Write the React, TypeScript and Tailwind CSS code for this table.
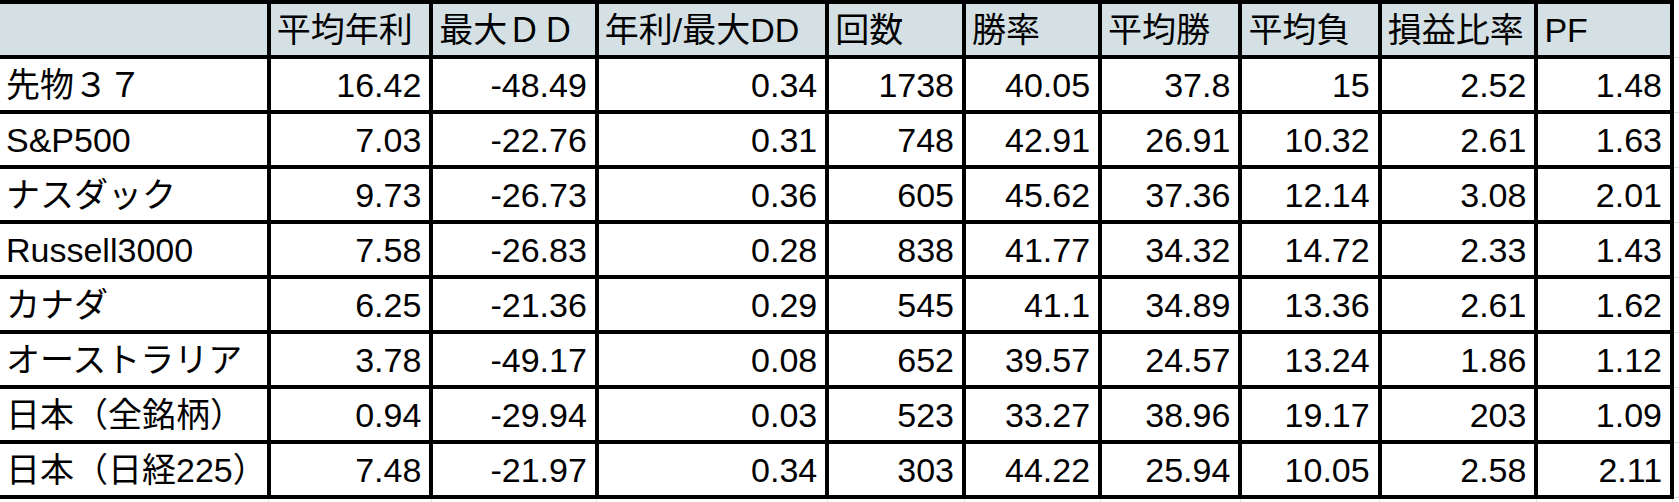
import React from 'react';

type Row = { name: string; values: string[] };

const headers = ['平均年利', '最大ＤＤ', '年利/最大DD', '回数', '勝率', '平均勝', '平均負', '損益比率', 'PF'];

const rows: Row[] = [
  { name: '先物３７', values: ['16.42', '-48.49', '0.34', '1738', '40.05', '37.8', '15', '2.52', '1.48'] },
  { name: 'S&P500', values: ['7.03', '-22.76', '0.31', '748', '42.91', '26.91', '10.32', '2.61', '1.63'] },
  { name: 'ナスダック', values: ['9.73', '-26.73', '0.36', '605', '45.62', '37.36', '12.14', '3.08', '2.01'] },
  { name: 'Russell3000', values: ['7.58', '-26.83', '0.28', '838', '41.77', '34.32', '14.72', '2.33', '1.43'] },
  { name: 'カナダ', values: ['6.25', '-21.36', '0.29', '545', '41.1', '34.89', '13.36', '2.61', '1.62'] },
  { name: 'オーストラリア', values: ['3.78', '-49.17', '0.08', '652', '39.57', '24.57', '13.24', '1.86', '1.12'] },
  { name: '日本（全銘柄）', values: ['0.94', '-29.94', '0.03', '523', '33.27', '38.96', '19.17', '203', '1.09'] },
  { name: '日本（日経225）', values: ['7.48', '-21.97', '0.34', '303', '44.22', '25.94', '10.05', '2.58', '2.11'] },
];

const widths = [262, 163, 166, 231, 138, 137, 141, 140, 157, 137];

export default function App() {
  return (
    <div
      className="w-[1679px] h-[502px] bg-white overflow-hidden text-black"
      style={{ fontFamily: '"Liberation Sans", "Noto Sans CJK JP", sans-serif' }}
    >
      <table className="table-fixed border-collapse text-[34px] leading-none">
        <colgroup>
          {widths.map((w, i) => (
            <col key={i} style={{ width: w }} />
          ))}
          <col style={{ width: 7 }} />
        </colgroup>
        <thead>
          <tr className="h-[55px] bg-[#d4e0e4]">
            <th className="border-t-[4px] border-b-[4px] border-r-[4px] border-black" />
            {headers.map((h) => (
              <th
                key={h}
                className="border-[4px] border-black pl-[6px] text-left font-normal whitespace-nowrap"
              >
                {h}
              </th>
            ))}
            <td className="bg-white border-b border-[#dcdcdc]" />
          </tr>
        </thead>
        <tbody>
          {rows.map((r) => (
            <tr key={r.name} className="h-[55px]">
              <td className="border-b-[4px] border-r-[4px] border-black pl-[6px] text-left whitespace-nowrap">
                {r.name}
              </td>
              {r.values.map((v, i) => (
                <td key={i} className="border-[4px] border-black pr-[8px] text-right whitespace-nowrap">
                  {v}
                </td>
              ))}
              <td className="border-b border-[#dcdcdc]" />
            </tr>
          ))}
          <tr className="h-[6px]">
            {widths.map((_, i) => (
              <td key={i} className="border-r border-[#dcdcdc]" />
            ))}
            <td />
          </tr>
        </tbody>
      </table>
    </div>
  );
}
